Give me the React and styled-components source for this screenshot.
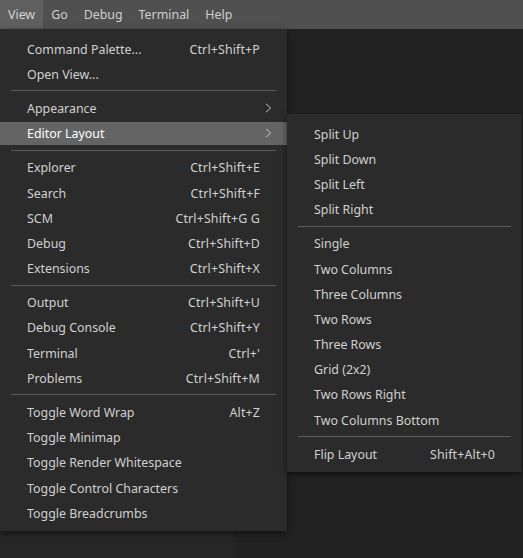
import React from 'react';
import styled, { createGlobalStyle } from 'styled-components';

const GlobalStyle = createGlobalStyle`
    html, body {
        margin: 0;
        padding: 0;
        background: #222222;
    }
    body {
        font-family: "Noto Sans", "Open Sans", sans-serif;
        -webkit-font-smoothing: antialiased;
    }
`

const titleMenus = ['View', 'Go', 'Debug', 'Terminal', 'Help'];

const viewMenu = [
    [
        { label: 'Command Palette...', keys: 'Ctrl+Shift+P' },
        { label: 'Open View...' },
    ],
    [
        { label: 'Appearance', submenu: true },
        { label: 'Editor Layout', submenu: true, active: true },
    ],
    [
        { label: 'Explorer', keys: 'Ctrl+Shift+E' },
        { label: 'Search', keys: 'Ctrl+Shift+F' },
        { label: 'SCM', keys: 'Ctrl+Shift+G G' },
        { label: 'Debug', keys: 'Ctrl+Shift+D' },
        { label: 'Extensions', keys: 'Ctrl+Shift+X' },
    ],
    [
        { label: 'Output', keys: 'Ctrl+Shift+U' },
        { label: 'Debug Console', keys: 'Ctrl+Shift+Y' },
        { label: 'Terminal', keys: "Ctrl+'" },
        { label: 'Problems', keys: 'Ctrl+Shift+M' },
    ],
    [
        { label: 'Toggle Word Wrap', keys: 'Alt+Z' },
        { label: 'Toggle Minimap' },
        { label: 'Toggle Render Whitespace' },
        { label: 'Toggle Control Characters' },
        { label: 'Toggle Breadcrumbs' },
    ],
];

const layoutMenu = [
    [
        { label: 'Split Up' },
        { label: 'Split Down' },
        { label: 'Split Left' },
        { label: 'Split Right' },
    ],
    [
        { label: 'Single' },
        { label: 'Two Columns' },
        { label: 'Three Columns' },
        { label: 'Two Rows' },
        { label: 'Three Rows' },
        { label: 'Grid (2x2)' },
        { label: 'Two Rows Right' },
        { label: 'Two Columns Bottom' },
    ],
    [
        { label: 'Flip Layout', keys: 'Shift+Alt+0' },
    ],
];

function Chevron() {
    return (
        <ChevronIcon viewBox="0 0 7 10" width="7" height="10">
            <path d="M1 0.8 L5.6 5 L1 9.2" fill="none" stroke="currentColor" strokeWidth="1" />
        </ChevronIcon>
    );
}

function Menu({ groups, left, top, width }) {
    return (
        <MenuPanel $left={left} $top={top} $width={width}>
            {groups.map((group, gi) => (
                <React.Fragment key={gi}>
                    {gi > 0 && <Separator />}
                    {group.map((item) => (
                        <Item key={item.label}>
                            <ItemInner $active={item.active}>
                                <Label>{item.label}</Label>
                                {item.keys && <Keys>{item.keys}</Keys>}
                                {item.submenu && <Chevron />}
                            </ItemInner>
                        </Item>
                    ))}
                </React.Fragment>
            ))}
        </MenuPanel>
    );
}

function App() {
    return (
        <>
            <GlobalStyle />
            <Window>
                <TitleBar>
                    {titleMenus.map((name) => (
                        <TitleItem key={name} $open={name === 'View'}>{name}</TitleItem>
                    ))}
                </TitleBar>
                <Workbench>
                    <Sidebar />
                    <Editor />
                </Workbench>
                <Menu groups={viewMenu} left={0} top={29} width={287} />
                <Menu groups={layoutMenu} left={287} top={114} width={235} />
            </Window>
        </>
    );
}

export default App;

const Window = styled.div`
    position: relative;
    width: 523px;
    height: 558px;
    overflow: hidden;
    display: flex;
    flex-direction: column;
    background: #222222;
`

const TitleBar = styled.div`
    height: 29px;
    flex-shrink: 0;
    display: flex;
    align-items: stretch;
    background: #505050;
`

const TitleItem = styled.div`
    display: flex;
    align-items: center;
    padding: 0 8px;
    font-size: 12.4px;
    color: ${(p) => (p.$open ? '#d4d4d4' : '#cfcfcf')};
    background: ${(p) => (p.$open ? '#5f5f5f' : 'transparent')};
`

const Workbench = styled.div`
    flex: 1;
    display: flex;
`

const Sidebar = styled.div`
    width: 235px;
    background: #262626;
`

const Editor = styled.div`
    flex: 1;
    background: #222222;
`

const MenuPanel = styled.div`
    position: absolute;
    left: ${(p) => p.$left}px;
    top: ${(p) => p.$top}px;
    width: ${(p) => p.$width}px;
    box-sizing: border-box;
    padding: 7px 0 6px;
    background: #2b2b2b;
    box-shadow: 0 2px 6px rgba(0, 0, 0, 0.55);
`

const Item = styled.div`
    height: 25.2px;
    display: flex;
    align-items: center;
`

const ItemInner = styled.div`
    flex: 1;
    height: 23px;
    display: flex;
    align-items: center;
    padding: 0 27px;
    font-size: 12.4px;
    color: ${(p) => (p.$active ? '#ffffff' : '#d0d0d0')};
    background: ${(p) => (p.$active ? '#646464' : 'transparent')};
`

const Label = styled.span`
    flex: 1;
    white-space: nowrap;
    padding-top: 1px;
`

const Keys = styled.span`
    white-space: nowrap;
    margin-left: 16px;
    padding-top: 1px;
    letter-spacing: 0.15px;
`

const ChevronIcon = styled.svg`
    display: block;
    margin-right: -12px;
    color: #c8c8c8;
`

const Separator = styled.div`
    height: 1px;
    margin: 4px 11px;
    background: #5c5c5c;
`
